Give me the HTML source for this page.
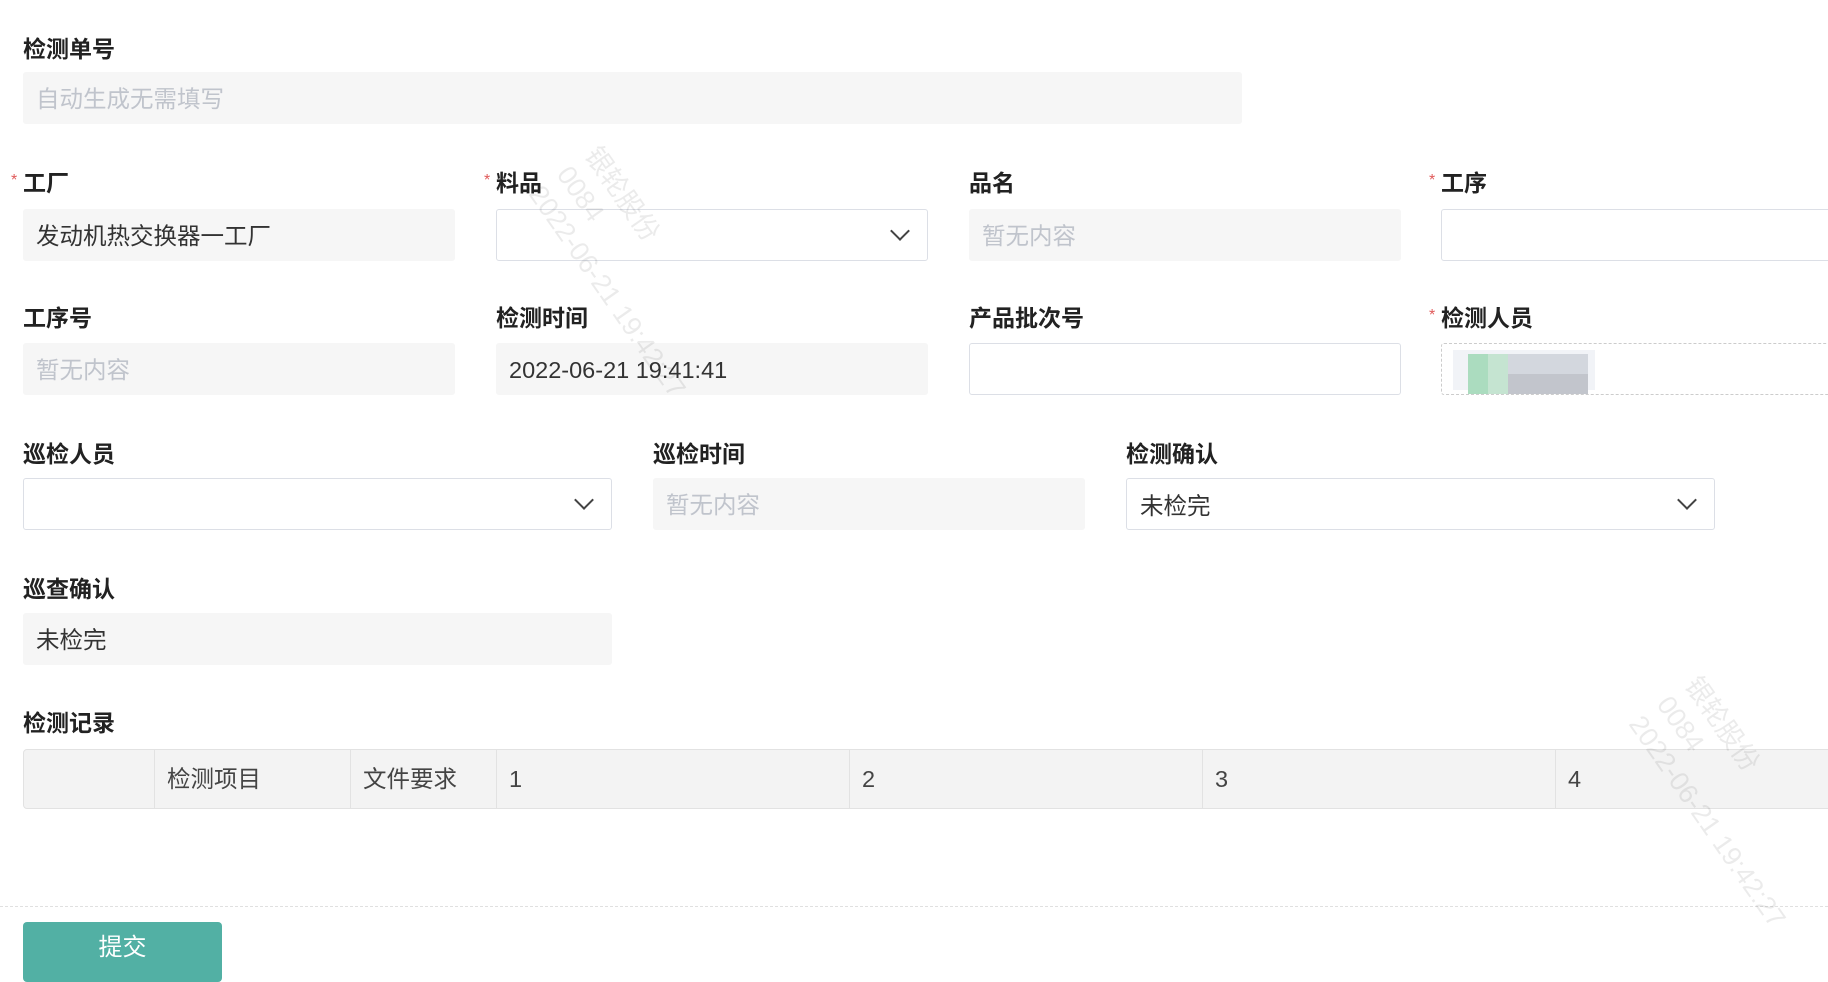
<!DOCTYPE html>
<html><head><meta charset="utf-8"><style>
*{box-sizing:border-box;margin:0;padding:0}
body{width:1828px;height:974px;overflow:hidden;background:#fff;font-family:"Liberation Sans","Noto Sans CJK SC",sans-serif;position:relative;color:#333}
.l{position:absolute;font-size:23px;font-weight:bold;color:#222;line-height:28px}
.l i{position:absolute;left:-12px;top:-2px;color:#e05a5a;font-style:normal;font-size:16px;font-weight:normal}
.f{position:absolute;height:52px;border-radius:3px;font-size:23.5px;line-height:54px;padding-left:13px;color:#333}
.g{background:#f6f6f6}
.ph{color:#c0c4cc}
.w{background:#fff;border:1px solid #dcdfe6}
.ar{position:absolute;right:20px;top:14px;width:14px;height:14px;border-right:2px solid #444;border-bottom:2px solid #444;transform:rotate(45deg)}
.tb{position:absolute;left:23px;top:749px;width:1830px;height:60px;background:#f3f3f3;border:1px solid #e2e2e2;border-radius:4px}
.c{position:absolute;top:0;height:58px;border-left:1px solid #e2e2e2;font-size:23.5px;line-height:58px;padding-left:12px;color:#444}
.wm{position:absolute;color:rgba(0,0,0,.08);font-size:27px;transform:rotate(55deg);transform-origin:left top;white-space:nowrap;line-height:34px}
</style></head><body>
<div class="l" style="left:23px;top:35px">检测单号</div>
<div class="f g ph" style="left:23px;top:72px;width:1219px">自动生成无需填写</div>

<div class="l" style="left:23px;top:169px"><i>*</i>工厂</div>
<div class="f g" style="left:23px;top:209px;width:432px">发动机热交换器一工厂</div>
<div class="l" style="left:496px;top:169px"><i>*</i>料品</div>
<div class="f w" style="left:496px;top:209px;width:432px"><span class="ar"></span></div>
<div class="l" style="left:969px;top:169px">品名</div>
<div class="f g ph" style="left:969px;top:209px;width:432px">暂无内容</div>
<div class="l" style="left:1441px;top:169px"><i>*</i>工序</div>
<div class="f w" style="left:1441px;top:209px;width:420px"></div>

<div class="l" style="left:23px;top:304px">工序号</div>
<div class="f g ph" style="left:23px;top:343px;width:432px">暂无内容</div>
<div class="l" style="left:496px;top:304px">检测时间</div>
<div class="f g" style="left:496px;top:343px;width:432px">2022-06-21 19:41:41</div>
<div class="l" style="left:969px;top:304px">产品批次号</div>
<div class="f w" style="left:969px;top:343px;width:432px"></div>
<div class="l" style="left:1441px;top:304px"><i>*</i>检测人员</div>
<div class="f" style="left:1441px;top:343px;width:420px;border:1px dashed #ccc">
<div style="position:absolute;left:11px;top:6px;width:142px;height:40px;background:#f1f3f7"></div>
<div style="position:absolute;left:26px;top:10px;width:20px;height:40px;background:#abdcbf"></div>
<div style="position:absolute;left:46px;top:10px;width:20px;height:40px;background:#c5e4d1"></div>
<div style="position:absolute;left:66px;top:10px;width:80px;height:20px;background:#d3d7de"></div>
<div style="position:absolute;left:66px;top:30px;width:80px;height:20px;background:#c2c5cc"></div>
</div>

<div class="l" style="left:23px;top:440px">巡检人员</div>
<div class="f w" style="left:23px;top:478px;width:589px"><span class="ar"></span></div>
<div class="l" style="left:653px;top:440px">巡检时间</div>
<div class="f g ph" style="left:653px;top:478px;width:432px">暂无内容</div>
<div class="l" style="left:1126px;top:440px">检测确认</div>
<div class="f w" style="left:1126px;top:478px;width:589px">未检完<span class="ar"></span></div>

<div class="l" style="left:23px;top:575px">巡查确认</div>
<div class="f g" style="left:23px;top:613px;width:589px">未检完</div>

<div class="l" style="left:23px;top:709px">检测记录</div>
<div class="tb">
<div class="c" style="left:130px;width:196px">检测项目</div>
<div class="c" style="left:326px;width:146px">文件要求</div>
<div class="c" style="left:472px;width:353px">1</div>
<div class="c" style="left:825px;width:353px">2</div>
<div class="c" style="left:1178px;width:353px">3</div>
<div class="c" style="left:1531px;width:353px">4</div>
</div>

<div style="position:absolute;left:0;top:906px;width:1828px;border-top:1px dashed #e0e0e0"></div>
<div style="position:absolute;left:23px;top:922px;width:199px;height:60px;background:#52b0a4;border-radius:4px;color:#fff;font-size:24px;text-align:center;line-height:52px">提交</div>

<div class="wm" style="left:605px;top:140px">银轮股份<br>0084<br>2022-06-21 19:42:27</div>
<div class="wm" style="left:1705px;top:670px">银轮股份<br>0084<br>2022-06-21 19:42:27</div>
</body></html>
